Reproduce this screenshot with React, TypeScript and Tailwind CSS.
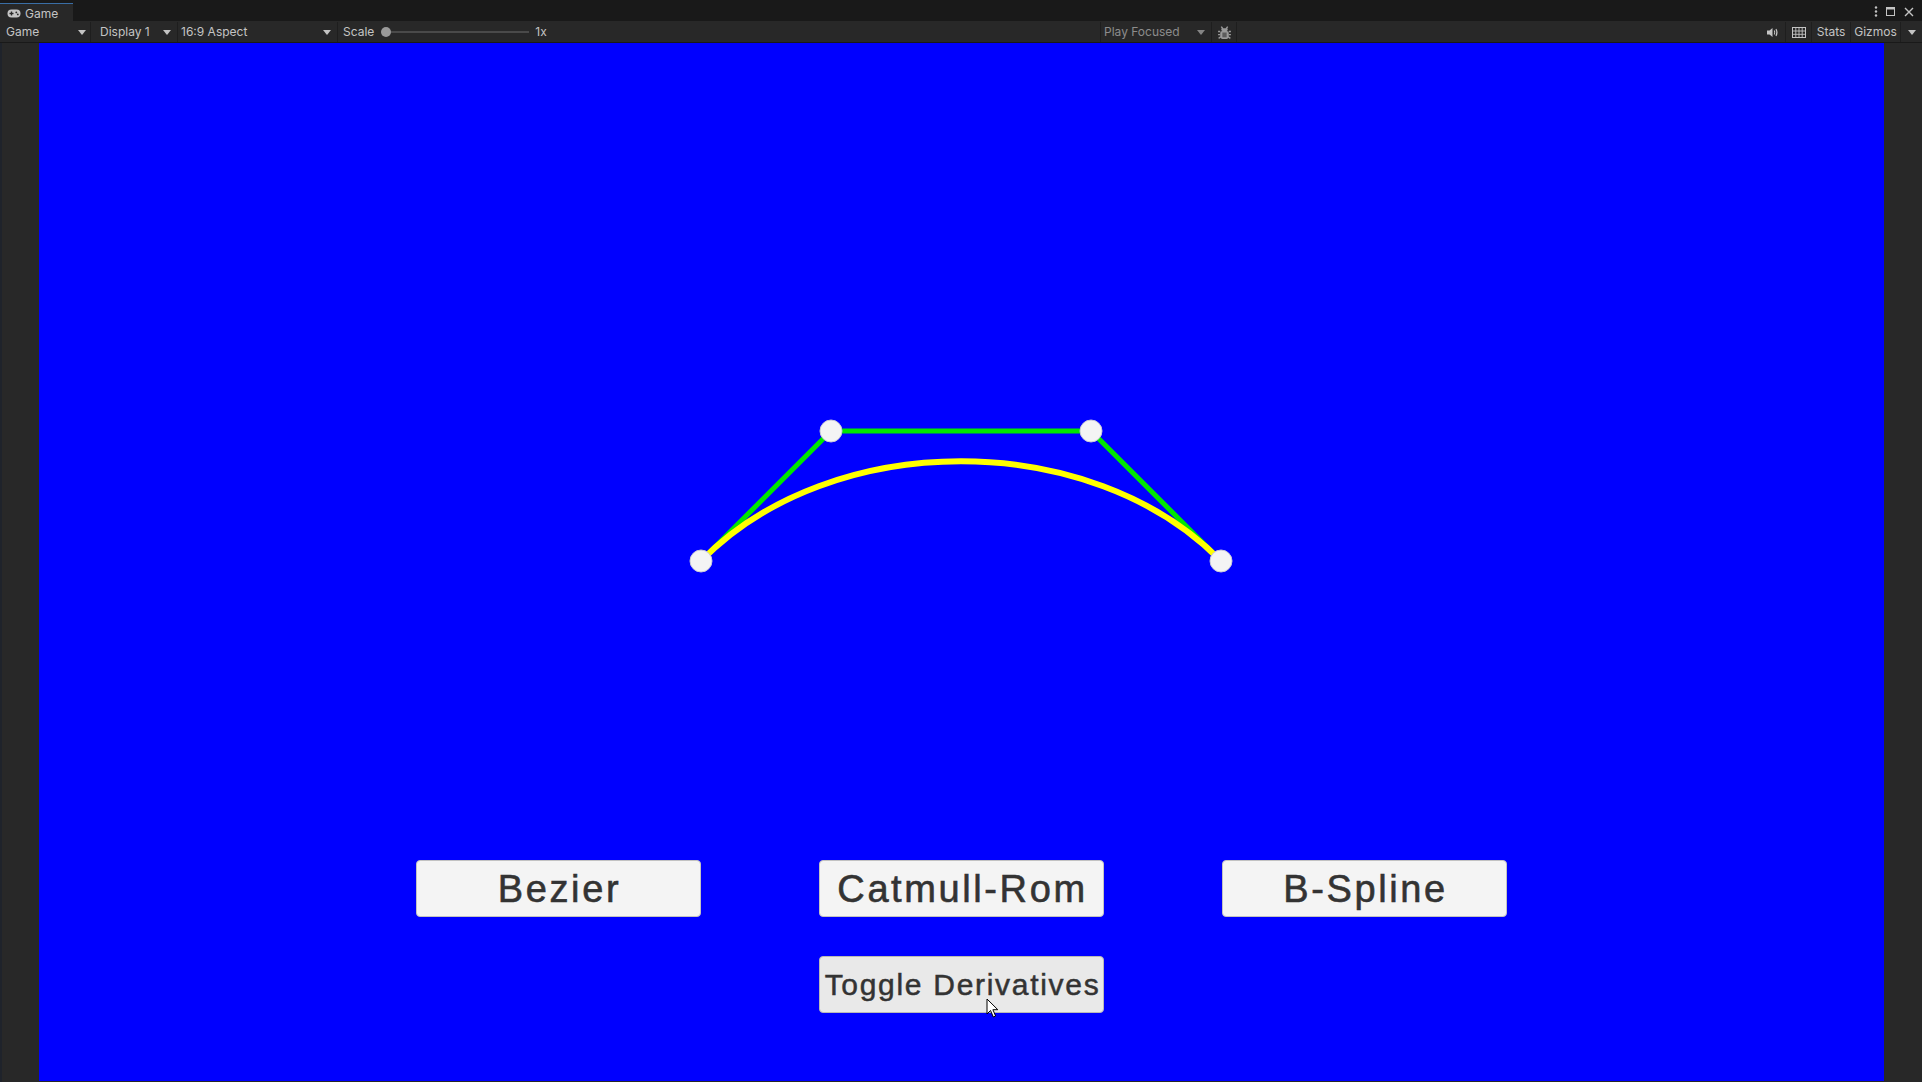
import React from "react";

const ui = { fontFamily: "Inter, 'Noto Sans', sans-serif" };
const gameFont = { fontFamily: "'Liberation Sans', Arial, sans-serif" };

function Caret({ className = "" }: { className?: string }) {
  return (
    <svg width="8" height="5" viewBox="0 0 8 5" className={className}>
      <path d="M0 0 H8 L4 5 Z" fill="#c4c4c4" />
    </svg>
  );
}

function GamepadIcon() {
  return (
    <svg width="14" height="9" viewBox="0 0 14 9">
      <rect x="0.5" y="0.5" width="13" height="8" rx="4" fill="#c4c4c4" />
      <rect x="2.5" y="3.8" width="4" height="1.4" fill="#282828" />
      <rect x="3.8" y="2.5" width="1.4" height="4" fill="#282828" />
      <circle cx="9.3" cy="3.4" r="0.9" fill="#282828" />
      <circle cx="10.8" cy="5.4" r="0.9" fill="#282828" />
    </svg>
  );
}

function BugIcon() {
  return (
    <svg width="15" height="15" viewBox="0 0 14 14">
      <g stroke="#9a9a9a" strokeWidth="1.3" fill="none">
        <path d="M4 1.5 L5.5 3.5 M10 1.5 L8.5 3.5" />
        <path d="M1 6 H3 M11 6 H13 M1 9 H3 M11 9 H13 M1.5 12.5 L3.5 11 M12.5 12.5 L10.5 11" />
      </g>
      <rect x="4" y="3" width="6" height="2.5" rx="1" fill="#9a9a9a" />
      <rect x="3" y="5.5" width="8" height="7.5" rx="2" fill="#9a9a9a" />
      <rect x="5" y="7" width="4" height="4.5" fill="#5c5c5c" />
    </svg>
  );
}

function SpeakerIcon() {
  return (
    <svg width="13" height="11" viewBox="0 0 13 11">
      <path d="M1 3.5 H3.5 L6.5 1 V10 L3.5 7.5 H1 Z" fill="#c4c4c4" />
      <path d="M8.3 3.6 Q9.3 5.5 8.3 7.4 M10 2 Q12 5.5 10 9" stroke="#c4c4c4" strokeWidth="1.1" fill="none" />
    </svg>
  );
}

function GridIcon() {
  return (
    <svg width="14" height="11" viewBox="0 0 14 11">
      <rect x="0.5" y="0.5" width="13" height="10" fill="none" stroke="#c4c4c4" strokeWidth="1" />
      <path d="M0.5 4 H13.5 M0.5 7.3 H13.5 M3.8 0.5 V10.5 M7 0.5 V10.5 M10.2 0.5 V10.5" stroke="#c4c4c4" strokeWidth="0.9" />
    </svg>
  );
}

function Cursor() {
  return (
    <svg width="14" height="21" viewBox="0 0 14 21" className="absolute left-[947px] top-[955px]">
      <path d="M1 1 V16 L4.5 12.5 L7.3 19 L9.6 18 L6.9 11.7 H11.8 Z" fill="#ffffff" stroke="#000000" strokeWidth="1" strokeLinejoin="round" />
    </svg>
  );
}

function CurveView() {
  const p0 = [662, 518];
  const p1 = [792, 388];
  const p2 = [1052, 388];
  const p3 = [1182, 518];
  const pts = [p0, p1, p2, p3];
  return (
    <svg width="1845" height="1038" className="absolute left-0 top-0">
      <polyline
        points={pts.map((p) => p.join(",")).join(" ")}
        fill="none"
        stroke="#00e600"
        strokeWidth="5"
      />
      <path
        d={`M${p0[0]} ${p0[1]} C${p1[0]} ${p1[1] - 3} ${p2[0]} ${p2[1] - 3} ${p3[0]} ${p3[1]}`}
        fill="none"
        stroke="#ffff00"
        strokeWidth="6"
      />
      {pts.map((p, i) => (
        <circle key={i} cx={p[0]} cy={p[1]} r="11" fill="#f4f4f4" stroke="#c9c9d6" strokeWidth="1" />
      ))}
    </svg>
  );
}

export default function App() {
  return (
    <div className="w-[1922px] h-[1082px] bg-[#282828] flex flex-col overflow-hidden text-[12px] text-[#c4c4c4]" style={ui}>
      {/* tab strip */}
      <div className="h-[21px] bg-[#191919] flex items-end">
        <div className="h-[18px] w-[73px] bg-[#282828] border-t border-[#3a6ea5] flex items-center gap-[4px] pl-[7px] pt-[2px]">
          <GamepadIcon />
          <span className="leading-none">Game</span>
        </div>
        <div className="flex-1" />
        <div className="h-[21px] flex items-center gap-[8px] pr-[8px] pt-[2px]">
          <svg width="4" height="11" viewBox="0 0 4 11">
            <circle cx="2" cy="1.5" r="1.2" fill="#c4c4c4" />
            <circle cx="2" cy="5.5" r="1.2" fill="#c4c4c4" />
            <circle cx="2" cy="9.5" r="1.2" fill="#c4c4c4" />
          </svg>
          <svg width="10" height="10" viewBox="0 0 10 10">
            <rect x="0.5" y="0.5" width="8" height="8" fill="none" stroke="#c4c4c4" />
            <rect x="0.5" y="0.5" width="8" height="2" fill="#c4c4c4" />
          </svg>
          <svg width="10" height="10" viewBox="0 0 10 10">
            <path d="M1 1 L9 9 M9 1 L1 9" stroke="#c4c4c4" strokeWidth="1.4" />
          </svg>
        </div>
      </div>

      {/* toolbar */}
      <div className="h-[22px] bg-[#282828] border-b border-[#191919] flex items-stretch pt-[1px]">
        <div className="w-[91px] flex items-center justify-between pl-[6px] pr-[4px] border-r border-[#1e1e1e]">
          <span>Game</span>
          <Caret />
        </div>
        <div className="w-[87px] flex items-center justify-between pl-[9px] pr-[6px] border-r border-[#1e1e1e]">
          <span>Display 1</span>
          <Caret />
        </div>
        <div className="w-[160px] flex items-center justify-between pl-[3px] pr-[6px] border-r border-[#1e1e1e]">
          <span>16:9 Aspect</span>
          <Caret />
        </div>
        <div className="w-[763px] flex items-center pl-[5px] border-r border-[#1e1e1e]">
          <span>Scale</span>
          <div className="relative ml-[7px] w-[148px] h-[10px] flex items-center">
            <div className="w-full h-[2px] bg-[#4a4a4a]" />
            <div className="absolute left-[0px] w-[10px] h-[10px] rounded-full bg-[#999999]" />
          </div>
          <span className="ml-[6px]">1x</span>
        </div>
        <div className="w-[111px] flex items-center justify-between pl-[3px] pr-[6px] border-r border-[#1e1e1e] text-[#8c8c8c]">
          <span>Play Focused</span>
          <Caret className="opacity-60" />
        </div>
        <div className="w-[25px] flex items-center justify-center border-r border-[#1e1e1e]">
          <BugIcon />
        </div>
        <div className="flex-1" />
        <div className="w-[26px] flex items-center justify-center border-r border-[#1e1e1e]">
          <SpeakerIcon />
        </div>
        <div className="w-[26px] flex items-center justify-center border-r border-[#1e1e1e]">
          <GridIcon />
        </div>
        <div className="w-[39px] flex items-center justify-center border-r border-[#1e1e1e]">
          <span>Stats</span>
        </div>
        <div className="w-[50px] flex items-center justify-center border-r border-[#1e1e1e]">
          <span>Gizmos</span>
        </div>
        <div className="w-[21px] flex items-center justify-center">
          <Caret />
        </div>
      </div>

      {/* game view */}
      <div className="flex-1 flex">
        <div className="w-[39px] bg-[#282828] border-l-2 border-[#1f232b]" />
        <div className="relative w-[1845px] h-[1038px] bg-[#0000ff]" style={gameFont}>
          <CurveView />
          <div className="relative flex flex-col items-center pt-[817px] gap-[39px]">
            <div className="flex gap-[118px]">
              {["Bezier", "Catmull-Rom", "B-Spline"].map((label) => (
                <button
                  key={label}
                  className="w-[285px] h-[57px] rounded-[4px] bg-[#f4f4f4] border border-[#c2c2c2] text-[38px] tracking-[2.6px] pl-[2px] text-[#333333] leading-none flex items-center justify-center [-webkit-text-stroke:0.6px_#333333]"
                >
                  {label}
                </button>
              ))}
            </div>
            <button className="w-[285px] h-[57px] rounded-[4px] bg-[#e9e9e9] border border-[#b8b8b8] text-[30px] tracking-[1.7px] pl-[2px] text-[#333333] leading-none flex items-center justify-center [-webkit-text-stroke:0.5px_#333333]">
              Toggle Derivatives
            </button>
          </div>
          <Cursor />
        </div>
        <div className="flex-1 bg-[#282828]" />
      </div>
    </div>
  );
}
